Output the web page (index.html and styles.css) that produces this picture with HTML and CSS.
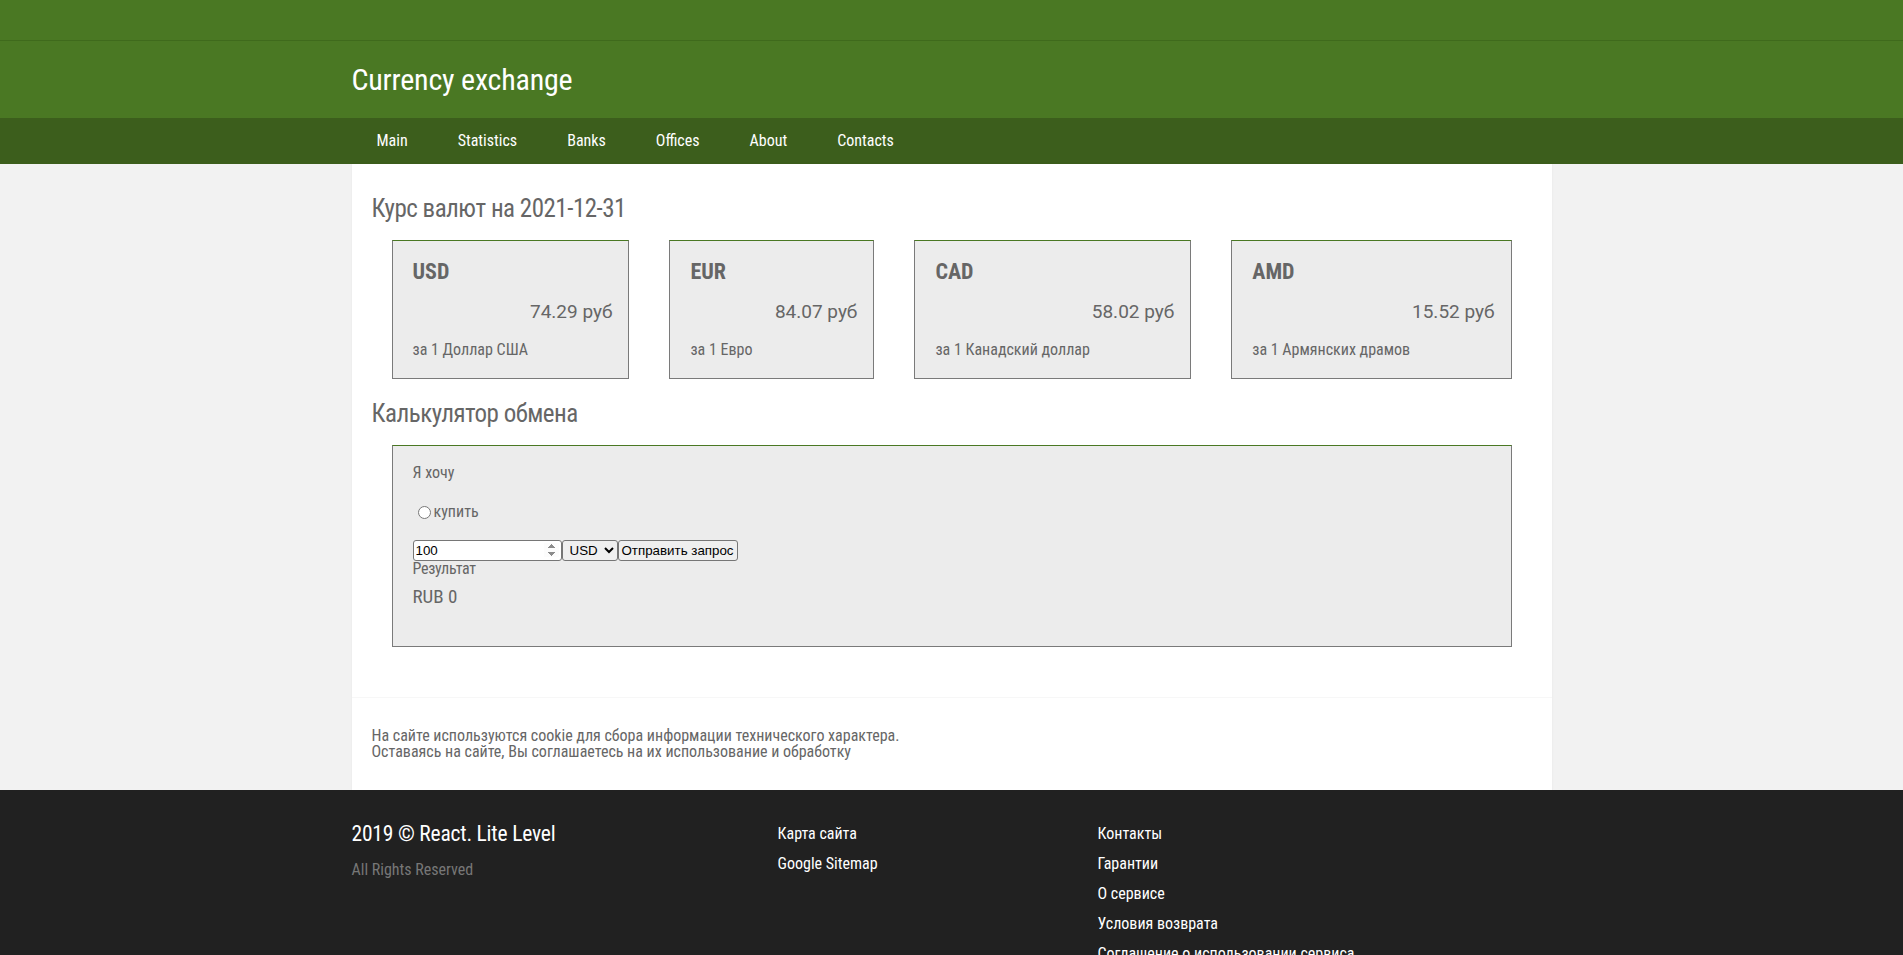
FILE: index.html
```html
<!DOCTYPE html>
<html lang="ru">
<head>
<meta charset="utf-8">
<title>Currency exchange</title>
<link rel="stylesheet" href="styles.css">
</head>
<body>
<div class="topbar"></div>
<header class="header">
  <div class="wrap"><h1 class="logo">Currency exchange</h1></div>
</header>
<nav class="nav">
  <div class="wrap nav-list">
    <a class="nav-link" href="#">Main</a>
    <a class="nav-link" href="#">Statistics</a>
    <a class="nav-link" href="#">Banks</a>
    <a class="nav-link" href="#">Offices</a>
    <a class="nav-link" href="#">About</a>
    <a class="nav-link" href="#">Contacts</a>
  </div>
</nav>
<main class="page">
  <section class="section">
    <h2 class="section-title">Курс валют на 2021-12-31</h2>
    <div class="cards">
      <div class="card">
        <div class="card-code">USD</div>
        <div class="card-rate">74.29 руб</div>
        <div class="card-note">за 1 Доллар США</div>
      </div>
      <div class="card">
        <div class="card-code">EUR</div>
        <div class="card-rate">84.07 руб</div>
        <div class="card-note">за 1 Евро</div>
      </div>
      <div class="card">
        <div class="card-code">CAD</div>
        <div class="card-rate">58.02 руб</div>
        <div class="card-note">за 1 Канадский доллар</div>
      </div>
      <div class="card">
        <div class="card-code">AMD</div>
        <div class="card-rate">15.52 руб</div>
        <div class="card-note">за 1 Армянских драмов</div>
      </div>
    </div>
    <h2 class="section-title">Калькулятор обмена</h2>
    <div class="calc">
      <div class="calc-label">Я хочу</div>
      <label class="calc-radio"><input type="radio" name="op">купить</label>
      <form class="calc-form">
        <input class="calc-input" type="number" value="100">
        <select class="calc-select"><option>USD</option><option>EUR</option><option>CAD</option><option>AMD</option></select>
        <button class="calc-btn" type="button">Отправить запрос</button>
      </form>
      <div class="calc-result-label">Результат</div>
      <div class="calc-result">RUB 0</div>
    </div>
  </section>
  <div class="cookie">
    На сайте используются cookie для сбора информации технического характера.<br>
    Оставаясь на сайте, Вы соглашаетесь на их использование и обработку
  </div>
</main>
<footer class="footer">
  <div class="wrap footer-grid">
    <div class="footer-brand">
      <div class="footer-title">2019 © React. Lite Level</div>
      <div class="footer-rights">All Rights Reserved</div>
    </div>
    <ul class="footer-links">
      <li><a href="#">Карта сайта</a></li>
      <li><a href="#">Google Sitemap</a></li>
    </ul>
    <ul class="footer-links">
      <li><a href="#">Контакты</a></li>
      <li><a href="#">Гарантии</a></li>
      <li><a href="#">О сервисе</a></li>
      <li><a href="#">Условия возврата</a></li>
      <li><a href="#">Соглашение о использовании сервиса</a></li>
    </ul>
  </div>
</footer>
</body>
</html>
```
FILE: styles.css
```css
:root {
  --cond: "Roboto Condensed", Roboto, "DejaVu Sans Condensed", sans-serif;
  --text: #666666;
}
* { box-sizing: border-box; }
html, body { margin: 0; padding: 0; }
body {
  background: #f2f2f2;
  font-family: Roboto, "Liberation Sans", sans-serif;
  color: var(--text);
  overflow: hidden;
}
.wrap { width: 1200px; margin: 0 auto; }

.topbar {
  height: 41px;
  background: #4a7823;
  border-bottom: 1px solid #3f6a1c;
}
.header {
  background: #4a7823;
  height: 77px;
  display: flex;
  align-items: center;
}
.logo {
  margin: 0;
  font-family: var(--cond);
  font-stretch: condensed;
  font-weight: normal;
  font-size: 30px;
  letter-spacing: -0.2px;
  line-height: 40px;
  color: #fff;
}
.nav { background: #3c5e1c; height: 46px; }
.nav-list { display: flex; }
.nav-link {
  padding: 0 25px;
  line-height: 46px;
  font-family: var(--cond);
  font-stretch: condensed;
  font-size: 16px;
  color: #fff;
  text-decoration: none;
}

.page {
  width: 1200px;
  margin: 0 auto;
  background: #fff;
  box-shadow: 0 0 2px rgba(0,0,0,0.06);
  padding: 29px 0 0;
  height: 626px;
}
.section {
  border-bottom: 1px solid #f7f7f7;
  padding: 0 20px 50px;
}
.section-title {
  margin: 0;
  font-family: var(--cond);
  font-stretch: condensed;
  font-weight: normal;
  font-size: 25px;
  letter-spacing: -0.5px;
  line-height: 32px;
  color: var(--text);
}
.cards {
  display: flex;
  gap: 40px;
  margin: 15px 20px 19px;
}
.card {
  flex: 1 1 auto;
  background: #ececec;
  border: 1px solid #7a7a7a;
  border-top-color: #4a7823;
  padding: 16px 16px 18px 20px;
}
.card-code {
  font-family: var(--cond);
  font-stretch: condensed;
  font-weight: bold;
  font-size: 22px;
  line-height: 30px;
}
.card-rate {
  margin-top: 10px;
  text-align: right;
  font-size: 19px;
  line-height: 30px;
}
.card-note {
  margin-top: 13px;
  font-family: var(--cond);
  font-stretch: condensed;
  font-size: 16px;
  line-height: 20px;
  white-space: nowrap;
}

.calc {
  margin: 15px 20px 0;
  height: 202px;
  background: #ececec;
  border: 1px solid #7a7a7a;
  border-top-color: #4a7823;
  padding: 17px 20px 0;
}
.calc-label {
  font-family: var(--cond);
  font-stretch: condensed;
  font-size: 16px;
  line-height: 20px;
}
.calc-radio {
  display: flex;
  align-items: center;
  margin-top: 19px;
  font-family: var(--cond);
  font-stretch: condensed;
  font-size: 16px;
  line-height: 20px;
}
.calc-radio input { margin: 0 3px 0 5px; width: 13px; height: 13px; }
.calc-form {
  display: flex;
  align-items: center;
  margin: 18px 0 0;
}
.calc-input,
.calc-select,
.calc-btn {
  height: 21px;
  font-size: 13.333px;
  border: 1px solid #767676;
  border-radius: 3px;
  color: #000;
}
.calc-input {
  width: 149px;
  background: #fff;
  padding: 1px 2px;
}
.calc-input::-webkit-inner-spin-button { opacity: 1; }
.calc-select {
  width: 56px;
  background: #efefef;
  padding: 0 0 0 3px;
}
.calc-btn {
  background: #efefef;
  padding: 0 3px;
}
.calc-result-label {
  font-family: var(--cond);
  font-stretch: condensed;
  font-size: 16px;
  letter-spacing: -0.3px;
  line-height: 16px;
}
.calc-result {
  margin-top: 8px;
  font-family: var(--cond);
  font-stretch: condensed;
  font-size: 19px;
  line-height: 24px;
}

.cookie {
  margin-top: 30px;
  padding: 0 20px;
  font-family: var(--cond);
  font-stretch: condensed;
  font-size: 16px;
  line-height: 16px;
}

.footer {
  background: #212121;
  height: 200px;
  padding-top: 29px;
}
.footer-grid {
  display: grid;
  grid-template-columns: 426px 320px 1fr;
}
.footer-title {
  margin-top: 3px;
  font-family: var(--cond);
  font-stretch: condensed;
  font-size: 21.5px;
  letter-spacing: -0.2px;
  line-height: 24px;
  color: #fff;
}
.footer-rights {
  margin-top: 14px;
  font-family: var(--cond);
  font-stretch: condensed;
  font-size: 16px;
  line-height: 20px;
  color: #777;
}
.footer-links {
  list-style: none;
  margin: 0;
  padding: 0;
}
.footer-links li { line-height: 30px; }
.footer-links a {
  font-family: var(--cond);
  font-stretch: condensed;
  font-size: 16px;
  color: #fff;
  text-decoration: none;
}
```
